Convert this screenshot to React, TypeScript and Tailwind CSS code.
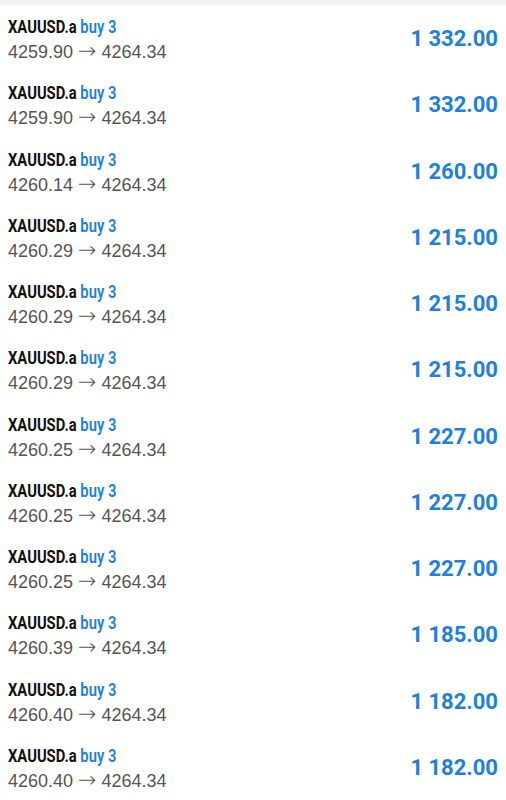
const rows: [string, string][] = [
  ["4259.90", "1 332.00"],
  ["4259.90", "1 332.00"],
  ["4260.14", "1 260.00"],
  ["4260.29", "1 215.00"],
  ["4260.29", "1 215.00"],
  ["4260.29", "1 215.00"],
  ["4260.25", "1 227.00"],
  ["4260.25", "1 227.00"],
  ["4260.25", "1 227.00"],
  ["4260.39", "1 185.00"],
  ["4260.40", "1 182.00"],
  ["4260.40", "1 182.00"],
];

export default function App() {
  return (
    <div className="w-[506px] h-[800px] bg-white overflow-hidden">
      <div className="h-[5px] bg-[#f1f1f3]" />
      <div className="flex flex-col pt-[11px]">
        {rows.map(([open, profit], i) => (
          <div key={i} className="h-[66.25px] flex items-start justify-between px-[8px]">
            <div className="flex flex-col">
              <div className="origin-left scale-x-[0.82] whitespace-nowrap text-[18px] leading-[22px] font-bold font-['Roboto',sans-serif]">
                <span className="text-[#111]">XAUUSD.a</span>{" "}
                <span className="text-[#1e7fe0] font-semibold">buy 3</span>
              </div>
              <div className="mt-[3px] text-[18px] leading-[22px] text-[#555] font-['Liberation_Sans',sans-serif] whitespace-nowrap">
                {open}{" "}
                <span className="text-[22px] leading-[18px] font-['DejaVu_Sans',sans-serif] font-light">→</span>{" "}
                4264.34
              </div>
            </div>
            <div className="mt-[10px] text-[22px] leading-[26px] font-bold text-[#1d7fe2] font-['Roboto',sans-serif]">
              {profit}
            </div>
          </div>
        ))}
      </div>
    </div>
  );
}
